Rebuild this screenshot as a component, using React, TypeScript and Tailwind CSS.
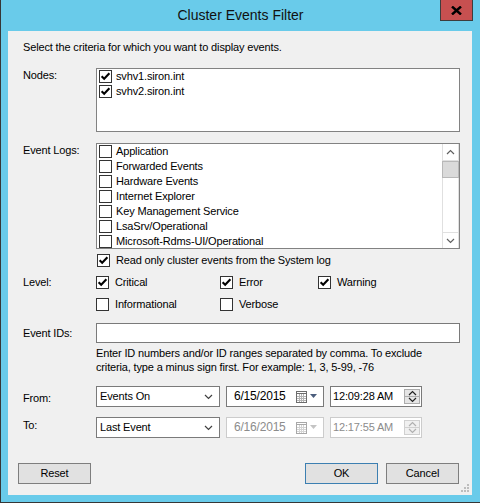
import React from "react";

function Check({ checked, disabled }: { checked?: boolean; disabled?: boolean }) {
  return (
    <span
      className={
        "w-[13px] h-[13px] border bg-white flex items-center justify-center shrink-0 " +
        (disabled ? "border-[#bcbcbc]" : "border-[#333333]")
      }
    >
      {checked && (
        <svg width="11" height="11" viewBox="0 0 11 11">
          <path d="M1.6 5.2 L4.2 7.8 L9.4 2.2" stroke="#000" strokeWidth="2.1" fill="none" />
        </svg>
      )}
    </span>
  );
}

function ListItem({ text, checked }: { text: string; checked?: boolean }) {
  return (
    <div className="h-[15px] flex items-center pl-[2px] gap-[4px] whitespace-nowrap">
      <Check checked={checked} />
      <span>{text}</span>
    </div>
  );
}

function Chevron({ up, color = "#606060" }: { up?: boolean; color?: string }) {
  return (
    <svg width="9" height="6" viewBox="0 0 9 6">
      <path
        d={up ? "M1 5 L4.5 1.5 L8 5" : "M1 1 L4.5 4.5 L8 1"}
        stroke={color}
        strokeWidth="1.2"
        fill="none"
      />
    </svg>
  );
}

function CalIcon({ disabled }: { disabled?: boolean }) {
  const c = disabled ? "#a8a8a8" : "#6d6d6d";
  const g = disabled ? "#d4d4d4" : "#b4b4b4";
  return (
    <svg width="11" height="12" viewBox="0 0 11 12">
      <rect x="0.5" y="0.5" width="10" height="11" fill="#fff" stroke={c} />
      <path d="M0.5 2.5 H10.5" stroke={c} />
      <path d="M3.5 3 V11 M5.5 3 V11 M7.5 3 V11 M1 5.5 H10 M1 7.5 H10 M1 9.5 H10" stroke={g} />
    </svg>
  );
}

function Spin({ disabled }: { disabled?: boolean }) {
  const b = disabled ? "border-[#d0d0d0] bg-[#f0f0f0]" : "border-[#acacac] bg-[#e5e5e5]";
  const c = disabled ? "#b0b0b0" : "#202020";
  return (
    <div className="flex flex-col w-[16px] h-[15px] mr-[1px]">
      <div className={"h-[8px] border flex items-center justify-center " + b}>
        <Chevron up color={c} />
      </div>
      <div className={"h-[7px] border border-t-0 flex items-center justify-center " + b}>
        <Chevron color={c} />
      </div>
    </div>
  );
}

function DatePick({ value, disabled }: { value: string; disabled?: boolean }) {
  return (
    <div
      className={
        "w-[98px] h-[21px] bg-white border flex items-center pl-[7px] pr-[5px] " +
        (disabled ? "border-[#cccccc] text-[#8c8c8c]" : "border-[#7a7a7a] text-black")
      }
    >
      <span className="flex-1 text-[12px] tracking-[-0.2px]">{value}</span>
      <CalIcon disabled={disabled} />
      <svg width="8" height="5" viewBox="0 0 8 5" className="ml-[3px]">
        <path d="M0 0 H7 L3.5 4 Z" fill={disabled ? "#c4c4c4" : "#4b5d7c"} />
      </svg>
    </div>
  );
}

function TimePick({ value, disabled }: { value: string; disabled?: boolean }) {
  return (
    <div
      className={
        "w-[92px] h-[21px] bg-white border flex items-center pl-[2px] " +
        (disabled ? "border-[#cccccc] text-[#8c8c8c]" : "border-[#7a7a7a] text-black")
      }
    >
      <span className="flex-1">{value}</span>
      <Spin disabled={disabled} />
    </div>
  );
}

function Combo({ value }: { value: string }) {
  return (
    <div className="w-[124px] h-[21px] bg-white border border-[#7a7a7a] flex items-center pl-[3px] pr-[6px]">
      <span className="flex-1">{value}</span>
      <Chevron color="#404040" />
    </div>
  );
}

function Btn({ text, primary }: { text: string; primary?: boolean }) {
  return (
    <div
      className={
        "w-[73px] h-[21px] bg-[#e1e1e1] border flex items-center justify-center " +
        (primary ? "border-[#3c7fb1]" : "border-[#7e7e7e]")
      }
    >
      {text}
    </div>
  );
}

export default function App() {
  const logs = [
    "Application",
    "Forwarded Events",
    "Hardware Events",
    "Internet Explorer",
    "Key Management Service",
    "LsaSrv/Operational",
    "Microsoft-Rdms-UI/Operational",
  ];
  return (
    <div className="w-[480px] h-[503px] bg-[#69cbea] border-l border-b border-[#363636] relative font-['Liberation_Sans',Arial,sans-serif] text-[11px] leading-[15px] tracking-[-0.15px] text-black flex flex-col">
      <div className="h-[31px] flex items-center justify-center text-[14px] tracking-normal text-[#111111]">
        Cluster Events Filter
      </div>
      <div className="absolute top-0 right-[7px] w-[33px] h-[21px] bg-[#c75050] border border-t-0 border-[#3d3d3d] flex items-center justify-center">
        <svg width="11" height="9" viewBox="0 0 11 9">
          <path d="M1 0.5 L10 8.5 M10 0.5 L1 8.5" stroke="#000" strokeWidth="2.4" />
        </svg>
      </div>

      <div className="ml-[7px] w-[464px] h-[464px] bg-[#f0f0f0] relative flex flex-col">
        <div className="mt-[9px] pl-[15px]">Select the criteria for which you want to display events.</div>

        {/* Nodes */}
        <div className="mt-[13px] flex">
          <div className="w-[88px] pl-[15px] shrink-0">Nodes:</div>
          <div className="w-[364px] h-[64px] bg-white border border-[#828282]">
            <ListItem text="svhv1.siron.int" checked />
            <ListItem text="svhv2.siron.int" checked />
          </div>
        </div>

        {/* Event logs */}
        <div className="mt-[11px] flex">
          <div className="w-[88px] pl-[15px] shrink-0">Event Logs:</div>
          <div className="w-[364px] h-[106px] bg-white border border-[#828282] flex overflow-hidden">
            <div className="flex-1 overflow-hidden">
              {logs.map((l) => (
                <ListItem key={l} text={l} />
              ))}
            </div>
            <div className="w-[17px] h-[104px] border-x border-[#e0e0e0] flex flex-col bg-white">
              <div className="h-[17px] border-b border-[#e0e0e0] flex items-center justify-center">
                <Chevron up />
              </div>
              <div className="h-[17px] bg-[#dadada] border border-[#b8b8b8] -mx-[1px]" />
              <div className="flex-1" />
              <div className="h-[16px] border-t border-[#e0e0e0] flex items-center justify-center">
                <Chevron />
              </div>
            </div>
          </div>
        </div>

        {/* Read only */}
        <div className="mt-[4px] h-[15px] flex items-center pl-[89px] gap-[6px]">
          <Check checked />
          <span>Read only cluster events from the System log</span>
        </div>

        {/* Level */}
        <div className="mt-[7px] h-[15px] flex items-center">
          <div className="w-[88px] pl-[15px] shrink-0">Level:</div>
          <div className="w-[124px] flex items-center gap-[6px]">
            <Check checked />
            <span>Critical</span>
          </div>
          <div className="w-[98px] flex items-center gap-[6px]">
            <Check checked />
            <span>Error</span>
          </div>
          <div className="flex items-center gap-[6px]">
            <Check checked />
            <span>Warning</span>
          </div>
        </div>
        <div className="mt-[7px] h-[15px] flex items-center">
          <div className="w-[88px] shrink-0" />
          <div className="w-[124px] flex items-center gap-[6px]">
            <Check />
            <span>Informational</span>
          </div>
          <div className="w-[98px] flex items-center gap-[6px]">
            <Check />
            <span>Verbose</span>
          </div>
        </div>

        {/* Event IDs */}
        <div className="mt-[11px] flex items-center">
          <div className="w-[88px] pl-[15px] shrink-0">Event IDs:</div>
          <div className="w-[364px] h-[20px] bg-white border border-[#7a7a7a]" />
        </div>
        <div className="mt-[3px] pl-[88px] leading-[14px] whitespace-nowrap">
          Enter ID numbers and/or ID ranges separated by comma. To exclude
          <br />
          criteria, type a minus sign first. For example: 1, 3, 5-99, -76
        </div>

        {/* From */}
        <div className="mt-[12px] flex items-center">
          <div className="w-[88px] pl-[15px] shrink-0 pt-[3px]">From:</div>
          <Combo value="Events On" />
          <div className="w-[6px]" />
          <DatePick value="6/15/2015" />
          <div className="w-[6px]" />
          <TimePick value="12:09:28 AM" />
        </div>

        {/* To */}
        <div className="mt-[10px] flex items-center">
          <div className="w-[88px] pl-[15px] shrink-0 pb-[4px]">To:</div>
          <Combo value="Last Event" />
          <div className="w-[6px]" />
          <DatePick value="6/16/2015" disabled />
          <div className="w-[6px]" />
          <TimePick value="12:17:55 AM" disabled />
        </div>

        {/* Buttons */}
        <div className="mt-[25px] flex pl-[10px] pr-[13px]">
          <Btn text="Reset" />
          <div className="flex-1" />
          <Btn text="OK" primary />
          <div className="w-[8px]" />
          <Btn text="Cancel" />
        </div>

        <svg width="10" height="10" viewBox="0 0 10 10" className="absolute right-[2px] bottom-[2px]">
          <rect x="7" y="1" width="2" height="2" fill="#bdbdbd" />
          <rect x="4" y="4" width="2" height="2" fill="#bdbdbd" />
          <rect x="7" y="4" width="2" height="2" fill="#bdbdbd" />
          <rect x="1" y="7" width="2" height="2" fill="#bdbdbd" />
          <rect x="4" y="7" width="2" height="2" fill="#bdbdbd" />
          <rect x="7" y="7" width="2" height="2" fill="#bdbdbd" />
        </svg>
      </div>
    </div>
  );
}
